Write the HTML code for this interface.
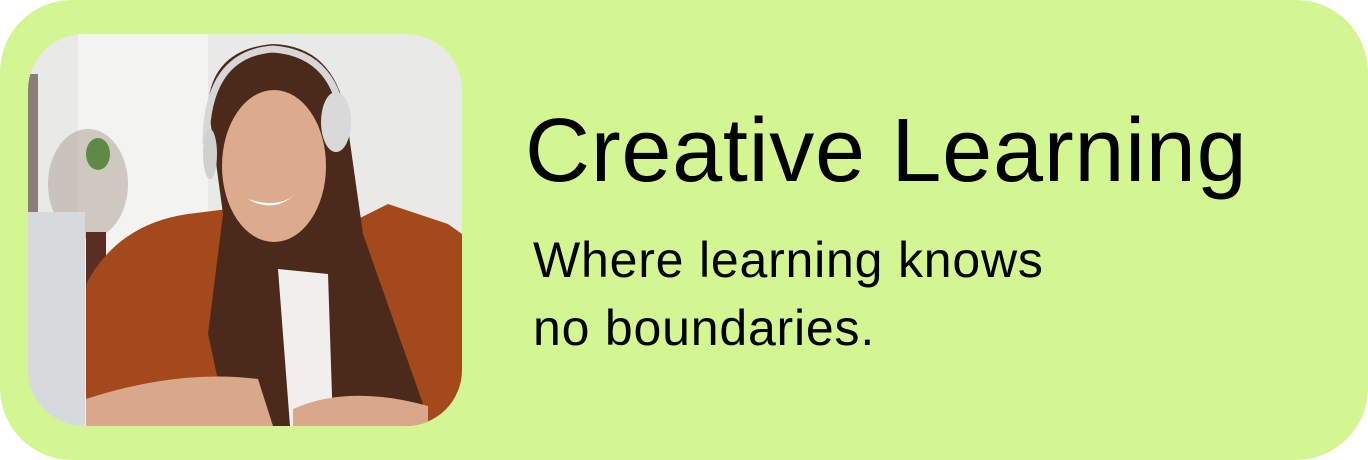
<!DOCTYPE html>
<html><head><style>
html,body{margin:0;padding:0;background:#fff;}
.card{position:absolute;left:0;top:0;width:1368px;height:460px;background:#d3f592;border-radius:72px;overflow:hidden;}
.photo{position:absolute;left:28px;top:34px;width:434px;height:392px;border-radius:56px;overflow:hidden;}
h1{position:absolute;left:525px;top:97px;margin:0;font:400 90px/1.2 "Liberation Sans",sans-serif;color:#000;white-space:nowrap;letter-spacing:0.7px;}
p{position:absolute;left:533px;top:226px;margin:0;font:400 50px/68px "Liberation Sans",sans-serif;color:#000;letter-spacing:0.8px;}
</style></head><body>
<div class="card">
<div class="photo">
<svg width="434" height="392" viewBox="0 0 434 392">
<rect width="434" height="392" fill="#e9e9e7"/>
<rect x="50" y="0" width="130" height="392" fill="#f3f3f1"/>
<rect x="0" y="40" width="10" height="180" fill="#8a7f78"/>
<ellipse cx="60" cy="150" rx="40" ry="55" fill="#a59588" opacity="0.45"/>
<ellipse cx="70" cy="120" rx="12" ry="16" fill="#5f8a45"/>
<rect x="58" y="198" width="20" height="60" fill="#5a2e22"/>
<path d="M58 250 Q90 190 160 180 L200 175 L230 210 L300 200 L360 170 L420 190 L434 200 L434 392 L58 392 Z" fill="#a4491c"/>
<path d="M180 70 Q185 15 245 10 Q305 12 318 80 L335 200 L395 370 L330 392 L200 392 L180 300 L195 180 Z" fill="#4b2a1b"/>
<path d="M250 235 L300 240 L305 392 L262 392 Z" fill="#f1efec"/>
<ellipse cx="246" cy="132" rx="52" ry="76" fill="#dcaa8c"/>
<path d="M220 165 Q245 180 268 160 Q250 175 220 165Z" fill="#fff"/>
<path d="M178 110 Q178 20 245 15 Q312 20 316 100" fill="none" stroke="#d7d7d7" stroke-width="7"/>
<ellipse cx="308" cy="88" rx="15" ry="30" fill="#d9d9d9"/>
<ellipse cx="182" cy="120" rx="7" ry="25" fill="#d0d0d0"/>
<path d="M58 365 Q150 335 230 345 L245 392 L58 392Z" fill="#d9a88b"/>
<path d="M265 375 Q320 350 400 372 L400 392 L265 392Z" fill="#d9a88b"/>
<rect x="0" y="178" width="57" height="214" fill="#d7dadd"/>
</svg>
</div>
<h1>Creative Learning</h1>
<p>Where learning knows<br>no boundaries.</p>
</div>
</body></html>
